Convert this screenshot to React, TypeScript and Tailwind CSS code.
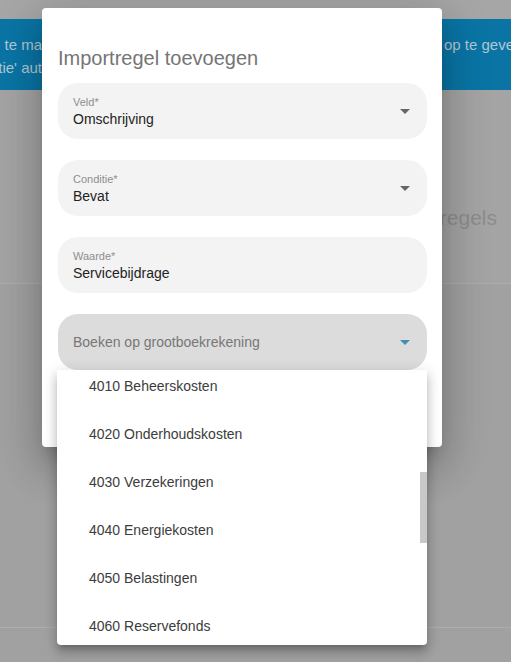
import React from "react";

const font = { fontFamily: '"Liberation Sans", Arial, sans-serif' };

function Caret({ color }: { color: string }) {
  return (
    <svg width="24" height="24" viewBox="0 0 24 24" className="shrink-0">
      <path d="M7 10l5 5 5-5z" fill={color} />
    </svg>
  );
}

function SelectField({ label, value, caret = true }: { label: string; value: string; caret?: boolean }) {
  return (
    <div className="flex h-[56px] items-center rounded-[20px] bg-[#f3f3f3] pl-[15px] pr-[10px]">
      <div className="flex flex-1 flex-col pt-[1px]">
        <span className="text-[11px] leading-[14px] text-[#8e8e8e]">{label}</span>
        <span className="text-[14px] leading-[20px] text-[#222]">{value}</span>
      </div>
      {caret && <Caret color="#666666" />}
    </div>
  );
}

const items = [
  "4010 Beheerskosten",
  "4020 Onderhoudskosten",
  "4030 Verzekeringen",
  "4040 Energiekosten",
  "4050 Belastingen",
  "4060 Reservefonds",
  "4070 Overige kosten",
];

export default function App() {
  return (
    <div className="relative h-[662px] w-[511px] overflow-hidden bg-[#a1a1a1]" style={font}>
      {/* background page */}
      <div className="h-[19px] bg-[#a6a6a6]" />
      <div className="h-[71px] bg-[#0a75a5] pt-[14px] text-[15px] leading-[23px] text-[#b1c8d3]">
        <div className="flex">
          <div className="flex w-[42px] justify-end overflow-hidden whitespace-nowrap">
            <span>Om importregels aan te leggen en te ma</span>
          </div>
          <div className="w-[402px]" />
          <div className="flex-1 overflow-hidden whitespace-nowrap">op te geven</div>
        </div>
        <div className="flex">
          <div className="flex w-[42px] justify-end overflow-hidden whitespace-nowrap">
            <span>en wordt de 'Conditie' aut</span>
          </div>
        </div>
      </div>
      <div className="flex h-[193px] items-start justify-end bg-[#a4a4a4] pr-[14px] pt-[115px]">
        <span className="whitespace-nowrap text-[21px] leading-[26px] text-[#8c8c8c]">Importregels</span>
      </div>
      <div className="h-[344px] border-t border-[#adadad] bg-[#a1a1a1]" />
      <div className="border-t border-[#adadad]" />

      {/* dialog */}
      <div className="absolute left-[42px] top-[8px] h-[439px] w-[400px] rounded-[4px] bg-white pl-[16px] pr-[15px] pt-[36px] shadow-[0_11px_15px_-7px_rgba(0,0,0,0.2),0_24px_38px_3px_rgba(0,0,0,0.14),0_9px_46px_8px_rgba(0,0,0,0.12)]">
        <h2 className="text-[20px] font-normal leading-[28px] text-[#757575]">Importregel toevoegen</h2>
        <div className="mt-[11px] flex flex-col gap-[21px]">
          <SelectField label="Veld*" value="Omschrijving" />
          <SelectField label="Conditie*" value="Bevat" />
          <SelectField label="Waarde*" value="Servicebijdrage" caret={false} />
          <div className="flex h-[56px] items-center rounded-[20px] bg-[#dcdcdc] pl-[15px] pr-[10px]">
            <span className="flex-1 text-[14px] text-[#777777]">Boeken op grootboekrekening</span>
            <Caret color="#3f8fb9" />
          </div>
        </div>
      </div>

      {/* dropdown menu */}
      <div className="absolute left-[57px] top-[370px] h-[275px] w-[370px] overflow-hidden rounded-b-[4px] bg-white shadow-[0_5px_5px_-3px_rgba(0,0,0,0.2),0_8px_10px_1px_rgba(0,0,0,0.14),0_3px_14px_2px_rgba(0,0,0,0.12)]">
        <ul className="mt-[-8px]">
          {items.map((it) => (
            <li
              key={it}
              className="flex h-[48px] items-center pl-[32px] text-[14px] text-[#3c3c3c]"
            >
              {it}
            </li>
          ))}
        </ul>
        <div className="absolute right-0 top-[102px] h-[71px] w-[7px] bg-[#c8c8c8]" />
      </div>
    </div>
  );
}
